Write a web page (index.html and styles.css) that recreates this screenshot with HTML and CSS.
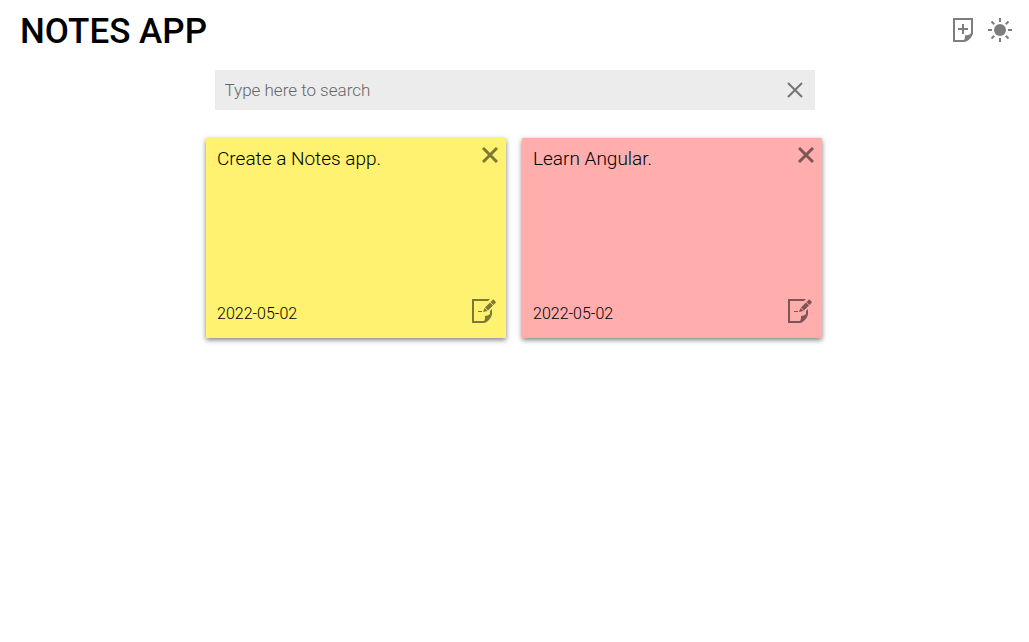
FILE: index.html
```html
<!DOCTYPE html>
<html lang="en">
<head>
<meta charset="utf-8">
<meta name="viewport" content="width=device-width, initial-scale=1">
<title>Notes App</title>
<link rel="stylesheet" href="styles.css">
</head>
<body>
<header class="header">
  <h1 class="title">NOTES APP</h1>
  <div class="actions">
    <button class="icon-button" type="button" aria-label="Add note">
      <svg class="icon" width="24" height="24" viewBox="0 0 24 24">
        <path fill="none" stroke="currentColor" stroke-width="2" d="M21 16V1H3v22h10"/>
        <path fill="currentColor" d="M22 15c0 3-5 9-9 9v-2c1-1 1-3 1-5 2 .5 5 0 6-2z"/>
        <path fill="none" stroke="currentColor" stroke-width="2" d="M12 6v10M7 11h10"/>
      </svg>
    </button>
    <button class="icon-button" type="button" aria-label="Toggle theme">
      <svg class="icon" width="24" height="24" viewBox="0 0 24 24">
        <circle cx="12" cy="12" r="6" fill="currentColor"/>
        <path fill="none" stroke="currentColor" stroke-width="2" d="M12 0v4M12 20v4M0 12h4M20 12h4M3.5 3.5l2.8 2.8M17.7 17.7l2.8 2.8M3.5 20.5l2.8-2.8M17.7 6.3l2.8-2.8"/>
      </svg>
    </button>
  </div>
</header>
<main>
  <form class="search" role="search">
    <input class="search-input" type="text" placeholder="Type here to search" aria-label="Search notes">
    <button class="icon-button" type="reset" aria-label="Clear search">
      <svg class="icon" width="16" height="16" viewBox="0 0 16 16"><path fill="none" stroke="currentColor" stroke-width="2" d="M1 1l14 14M15 1L1 15"/></svg>
    </button>
  </form>
  <section class="notes" aria-label="Notes">
    <article class="note note-yellow">
      <div class="note-row">
        <p class="note-text">Create a Notes app.</p>
        <button class="icon-button" type="button" aria-label="Delete note">
          <svg class="icon" width="16" height="16" viewBox="0 0 16 16"><path fill="none" stroke="currentColor" stroke-width="3" d="M1 1l14 14M15 1L1 15"/></svg>
        </button>
      </div>
      <div class="note-row note-footer">
        <time class="note-date" datetime="2022-05-02">2022-05-02</time>
        <button class="icon-button" type="button" aria-label="Edit note">
          <svg class="icon" width="24" height="24" viewBox="0 0 24 24">
            <path fill="currentColor" d="M0 0h18l-2 2H2v20h10c1-1 1-3 1-5 2 0 4-1 5-2v-3l2-2v5c0 3-5 9-8 9H0zM6 12h4v1H6zM11 13l1.500-4 3 3zM13 8.500l5-5 3 3-5 5zM18.500 3l2-2c.6-.6 1-.5 1.500 0l1.500 1.500c.5.500.5 1 0 1.500l-2 2z"/>
          </svg>
        </button>
      </div>
    </article>
    <article class="note note-pink">
      <div class="note-row">
        <p class="note-text">Learn Angular.</p>
        <button class="icon-button" type="button" aria-label="Delete note">
          <svg class="icon" width="16" height="16" viewBox="0 0 16 16"><path fill="none" stroke="currentColor" stroke-width="3" d="M1 1l14 14M15 1L1 15"/></svg>
        </button>
      </div>
      <div class="note-row note-footer">
        <time class="note-date" datetime="2022-05-02">2022-05-02</time>
        <button class="icon-button" type="button" aria-label="Edit note">
          <svg class="icon" width="24" height="24" viewBox="0 0 24 24">
            <path fill="currentColor" d="M0 0h18l-2 2H2v20h10c1-1 1-3 1-5 2 0 4-1 5-2v-3l2-2v5c0 3-5 9-8 9H0zM6 12h4v1H6zM11 13l1.500-4 3 3zM13 8.500l5-5 3 3-5 5zM18.500 3l2-2c.6-.6 1-.5 1.500 0l1.500 1.500c.5.500.5 1 0 1.500l-2 2z"/>
          </svg>
        </button>
      </div>
    </article>
  </section>
</main>
</body>
</html>
```
FILE: styles.css
```css
* {
  box-sizing: border-box;
}

body {
  margin: 0;
  background: #fff;
  color: #000;
  font-family: Roboto, "Liberation Sans", sans-serif;
  font-weight: 300;
}

.header {
  display: flex;
  align-items: center;
  justify-content: space-between;
  height: 60px;
  padding: 0 17px 0 20px;
}

.title {
  margin: 0;
  padding-top: 3px;
  font-size: 35px;
  font-weight: 500;
  line-height: 42px;
}

.actions {
  display: flex;
  gap: 13px;
}

.icon-button {
  display: flex;
  flex: none;
  padding: 0;
  border: 0;
  background: none;
  color: #000;
  opacity: 0.5;
  cursor: pointer;
}

.icon {
  display: block;
}

.search {
  display: flex;
  align-items: center;
  width: 100%;
  max-width: 600px;
  height: 40px;
  margin: 10px auto 20px;
  padding-right: 12px;
  background: #ececec;
}

.search-input {
  flex: 1;
  min-width: 0;
  height: 100%;
  padding: 0 10px;
  border: 0;
  background: none;
  color: inherit;
  font: inherit;
  font-size: 17px;
}

.search-input::placeholder {
  color: #666;
}

.notes {
  display: flex;
  flex-wrap: wrap;
  justify-content: center;
  gap: 16px;
  padding: 8px 9px 8px 8px;
}

.note {
  display: flex;
  flex-direction: column;
  justify-content: space-between;
  width: 300px;
  min-height: 200px;
  padding: 9px 8px 15px 11px;
  box-shadow: 0 2px 5px rgba(0, 0, 0, 0.5);
}

.note-yellow {
  background: #fff270;
}

.note-pink {
  background: #ffadad;
}

.note-row {
  display: flex;
  align-items: flex-start;
  justify-content: space-between;
}

.note-footer {
  align-items: flex-end;
  padding-right: 2px;
}

.note-text {
  margin: 0;
  font-size: 19px;
  line-height: 24px;
}

.note-date {
  font-size: 16px;
  line-height: 18px;
}
```
